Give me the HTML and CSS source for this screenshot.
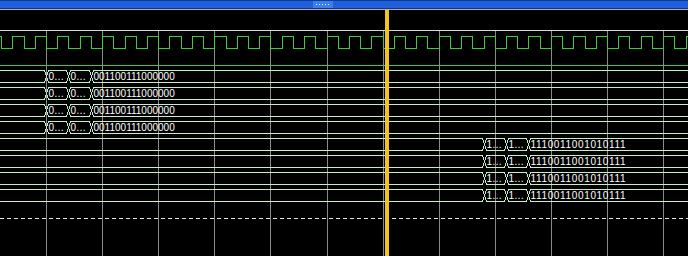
FILE: index.html
```html
<!DOCTYPE html>
<html>
<head>
  <link rel="stylesheet" href="styles.css">
</head>
<body>
  <div class="viewer">
    <div class="hscroll">
      <div class="thumb"><div class="grip"></div></div>
    </div>
    <div class="ruler"></div>
    <svg class="waves" id="waves" width="688" height="225"></svg>
    <div class="cursor"></div>
  </div>

  <script>
    var NS = 'http://www.w3.org/2000/svg';
    var svg = document.getElementById('waves');

    // timing: one grid division = 2.5 clock periods
    var gridStart = 46, gridStep = 56.1;
    var period = 22.44, half = period / 2;

    function px(x) {
      return Math.round(x) + 0.5;
    }

    function add(tag, attrs, text) {
      var el = document.createElementNS(NS, tag);
      for (var k in attrs) el.setAttribute(k, attrs[k]);
      if (text) el.textContent = text;
      svg.appendChild(el);
      return el;
    }

    // vertical grid
    for (var gx = gridStart; gx < 688; gx += gridStep) {
      add('line', { x1: px(gx), x2: px(gx), y1: 0, y2: 225, 'class': 'grid' });
    }

    // clock: falls on the grid line at 46
    var high = 5.5, low = 17.5;
    var d = 'M0 ' + high;
    var level = high;
    for (var t = gridStart - 2 * period; t < 700; t += half) {
      level = level === high ? low : high;
      d += ' H' + px(t) + ' V' + level;
    }
    d += ' H700';
    add('path', { d: d, 'class': 'bit' });

    // constant low signal
    add('line', { x1: 0, x2: 688, y1: 34.5, y2: 34.5, 'class': 'bit' });

    // bus rows
    function bus(row, edges, labels, wide) {
      var top = 39.5 + row * 17, bottom = top + 12, mid = top + 6;
      var xs = [-10].concat(edges, [700]);
      for (var i = 0; i < xs.length - 1; i++) {
        var a = px(xs[i]), b = px(xs[i + 1]);
        var pts = [
          a + ',' + mid, (a + 2) + ',' + top, (b - 2) + ',' + top,
          b + ',' + mid, (b - 2) + ',' + bottom, (a + 2) + ',' + bottom
        ];
        add('polygon', { points: pts.join(' '), 'class': 'bus' });
        if (i > 0) {
          add('text', {
            x: a + 2, y: top + 9.5,
            'class': 'value' + (wide && i === xs.length - 2 ? ' wide' : '')
          }, labels[i - 1]);
        }
      }
    }

    var e1 = [gridStart, gridStart + period, gridStart + 2 * period];
    var r = gridStart + half + 19 * period;
    var e2 = [r, r + period, r + 2 * period];

    for (var row = 0; row < 4; row++) {
      bus(row, e1, ['0\u2026', '0\u2026', '001100111000000'], false);
    }
    for (var row = 4; row < 8; row++) {
      bus(row, e2, ['1\u2026', '1\u2026', '1110011001010111'], true);
    }

    // divider
    add('line', { x1: 0, x2: 688, y1: 187.5, y2: 187.5, 'class': 'divider' });
  </script>
</body>
</html>
```

FILE: styles.css
```css
body {
  margin: 0;
  background: #000;
  overflow: hidden;
}

.viewer {
  position: relative;
  width: 688px;
  height: 256px;
  display: flex;
  flex-direction: column;
  background: #000;
}

.hscroll {
  height: 7px;
  background: #1f60da;
  border-top: 1px solid #123a96;
  border-bottom: 1px solid #0e3690;
  display: flex;
}

.thumb {
  margin-left: 313px;
  width: 20px;
  background: #3a7ef0;
  display: flex;
  align-items: center;
  justify-content: center;
}

.grip {
  width: 15px;
  height: 1px;
  background: repeating-linear-gradient(90deg, #e8f0ff 0 1px, transparent 1px 3px);
}

.ruler {
  height: 20px;
  background: #000;
  border-top: 1px solid #b0b0b0;
  border-bottom: 1px solid #d8d8d8;
}

.waves {
  display: block;
  shape-rendering: crispEdges;
}

.grid {
  stroke: #8a8a8a;
  stroke-width: 1;
}

.bit {
  fill: none;
  stroke: #3ccc3c;
  stroke-width: 1;
}

.bus {
  fill: none;
  stroke: #c8eec8;
  stroke-width: 1;
}

.value {
  fill: #fff;
  font-family: "Liberation Sans", Arial, sans-serif;
  font-size: 10px;
}

.value.wide {
  letter-spacing: 0.65px;
}

.divider {
  stroke: #e0e0e0;
  stroke-width: 1;
  stroke-dasharray: 4 3;
}

.cursor {
  position: absolute;
  left: 385px;
  top: 10px;
  width: 4px;
  bottom: 0;
  background: #f2c41c;
}
```
